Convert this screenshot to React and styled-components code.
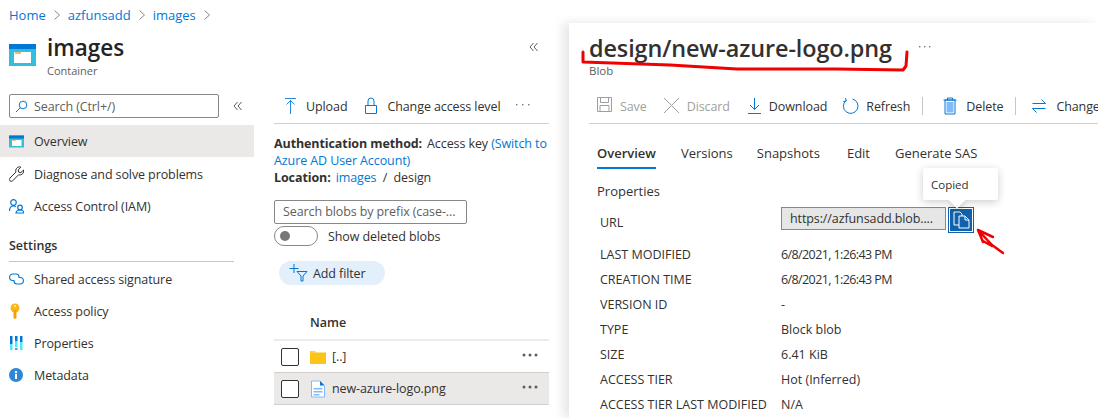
import React from "react";
import styled, { createGlobalStyle } from "styled-components";

const Global = createGlobalStyle`
  html, body { margin: 0; padding: 0; background: #fff; }
  * { box-sizing: border-box; }
  #root { font-family: "Open Sans", "Noto Sans", sans-serif; color: #323130; }
`;

const Page = styled.div`
  position: relative;
  width: 1098px;
  height: 418px;
  overflow: hidden;
  display: grid;
  grid-template-columns: 569px 529px;
  background: #fff;
`;
const LeftArea = styled.div`
  display: flex;
  flex-direction: column;
  min-width: 0;
`;
const Breadcrumb = styled.nav`
  height: 30px;
  padding-left: 9px;
  display: flex;
  align-items: center;
  gap: 7px;
  font-size: 13px;
`;
const Crumb = styled.a`
  color: #0078d4;
`;
const Chevron = styled.svg`
  width: 8px;
  height: 12px;
  fill: none;
  stroke: #8a8886;
  stroke-width: 1;
`;
const Blade = styled.div`
  flex: 1;
  display: grid;
  grid-template-columns: 254px 315px;
  align-content: start;
`;
const ResourceHead = styled.header`
  grid-column: 1 / 3;
  height: 50px;
  padding: 3px 30px 0 9px;
  display: flex;
  align-items: flex-start;
  gap: 11px;
`;
const HeadIcon = styled.svg`
  width: 27px;
  height: 22px;
  margin-top: 11px;
  flex: none;
`;
const HeadText = styled.div`
  flex: 1;
`;
const ResourceTitle = styled.h1`
  margin: 0;
  font-size: 22.5px;
  line-height: 30px;
  font-weight: 600;
  color: #252423;
`;
const SubTitle = styled.div`
  font-size: 11px;
  line-height: 14px;
  margin-top: 1px;
  color: #605e5c;
`;
const Collapse = styled.svg`
  width: 10px;
  height: 10px;
  flex: none;
  fill: none;
  stroke: #605e5c;
  stroke-width: 1;
  margin-top: ${(p) => p.$top || 0}px;
`;
const Sidebar = styled.aside`
  display: flex;
  flex-direction: column;
`;
const SearchRow = styled.div`
  display: flex;
  align-items: center;
  padding-left: 9px;
  height: 24px;
  margin-top: 14px;
  margin-bottom: 7px;
  gap: 14px;
`;
const SearchBox = styled.div`
  width: 210px;
  height: 24px;
  border: 1px solid #8a8886;
  border-radius: 2px;
  display: flex;
  align-items: center;
  gap: 6px;
  padding-left: 5px;
  font-size: 12.5px;
  letter-spacing: -0.1px;
  color: #605e5c;
`;
const NavItem = styled.div`
  height: 32px;
  display: flex;
  align-items: center;
  padding-left: 9px;
  padding-top: ${(p) => (p.$active ? "1px" : "0")};
  gap: 10px;
  font-size: 12.5px;
  letter-spacing: -0.1px;
  background: ${(p) => (p.$active ? "#ebe9e7" : "transparent")};
  margin-bottom: ${(p) => (p.$active ? "1px" : "0")};
`;
const NavIcon = styled.svg`
  width: 15px;
  height: 16px;
  flex: none;
`;
const SectionTitle = styled.div`
  margin: 14px 20px 0 9px;
  height: 26px;
  border-bottom: 1px solid #c8c6c4;
  font-size: 12.5px;
  font-weight: 600;
  line-height: 20px;
`;
const SectionItems = styled.div`
  margin-top: 1px;
`;
const Files = styled.section`
  padding: 0 20px 0 20px;
  display: flex;
  flex-direction: column;
`;
const Toolbar = styled.div`
  display: flex;
  align-items: center;
  height: ${(p) => p.$h}px;
  padding-top: ${(p) => p.$top}px;
  border-bottom: 1px solid #d2d0ce;
  padding-left: ${(p) => p.$pad || 0}px;
  flex: none;
`;
const Actions = styled(Toolbar)`
  overflow: hidden;
`;
const ToolButton = styled.div`
  display: flex;
  align-items: center;
  gap: ${(p) => p.$gap || 8}px;
  margin-right: ${(p) => p.$mr || 0}px;
  font-size: 12.5px;
  letter-spacing: -0.1px;
  white-space: nowrap;
  color: ${(p) => (p.$disabled ? "#a19f9d" : "#323130")};
`;
const ToolIcon = styled.svg`
  width: ${(p) => p.$w || 16}px;
  height: 18px;
  flex: none;
`;
const Dots = styled.svg`
  flex: none;
  width: ${(p) => p.$w}px;
  height: 3px;
  margin-top: -3px;
  fill: #797775;
`;
const Info = styled.div`
  margin-top: 11px;
  font-size: 12.5px;
  line-height: 17px;
  letter-spacing: -0.1px;
`;
const Strong = styled.b`
  font-weight: 700;
  margin-right: 5px;
`;
const Link = styled.span`
  color: #0078d4;
`;
const BlobSearch = styled.div`
  margin-top: 14px;
  width: 193px;
  height: 24px;
  border: 1px solid #8a8886;
  border-radius: 2px;
  padding-left: 8px;
  font-size: 12.5px;
  line-height: 22px;
  letter-spacing: -0.1px;
  color: #605e5c;
  white-space: nowrap;
`;
const ToggleRow = styled.div`
  display: flex;
  align-items: center;
  margin-top: 2px;
  gap: 10px;
  font-size: 12.5px;
  letter-spacing: -0.1px;
`;
const Toggle = styled.div`
  width: 44px;
  height: 20px;
  border: 1px solid #8a8886;
  border-radius: 10px;
  padding: 4px 5px;
`;
const Knob = styled.div`
  width: 10px;
  height: 10px;
  border-radius: 50%;
  background: #797775;
`;
const FilterPill = styled.div`
  margin: 15px 0 0 5px;
  width: 106px;
  height: 24px;
  border-radius: 12px;
  background: #e3f0fb;
  display: flex;
  align-items: center;
  gap: 5px;
  padding-left: 10px;
  font-size: 12.5px;
  letter-spacing: -0.1px;
`;
const TableHead = styled.div`
  margin-top: 27px;
  height: 29px;
  padding-left: 36px;
  border-bottom: 2px solid #edebe9;
  font-size: 12.5px;
  font-weight: 600;
  line-height: 22px;
`;
const FileRow = styled.div`
  height: ${(p) => (p.$selected ? 33 : 31)}px;
  display: flex;
  align-items: center;
  padding: 0 10px 0 7px;
  font-size: 12.5px;
  letter-spacing: -0.1px;
  background: ${(p) => (p.$selected ? "#ebe9e7" : "#fff")};
  border-top: ${(p) => (p.$selected ? "1px solid #d2d0ce" : "none")};
  border-bottom: ${(p) => (p.$selected ? "1px solid #d2d0ce" : "none")};
`;
const Check = styled.div`
  width: 18px;
  height: 18px;
  border: 1px solid #323130;
  border-radius: 2px;
  background: #fff;
  flex: none;
  margin-right: 11px;
`;
const FileIcon = styled.svg`
  width: 16px;
  height: 18px;
  flex: none;
  margin-right: 6px;
`;
const FileName = styled.span`
  flex: 1;
`;
const RowDots = styled.svg`
  width: 18px;
  height: 4px;
  flex: none;
  fill: #605e5c;
  margin-top: -3px;
`;
const Pane = styled.main`
  position: relative;
  margin-top: 23px;
  padding-left: 20px;
  box-shadow: -6px 0 10px rgba(0, 0, 0, 0.1);
  display: flex;
  flex-direction: column;
  min-width: 0;
  background: #fff;
`;
const PaneHead = styled.header`
  height: 60px;
  padding-top: 10px;
`;
const TitleRow = styled.div`
  display: flex;
  align-items: center;
  height: 30px;
  gap: 27px;
`;
const PaneTitle = styled.h2`
  margin: 0;
  font-size: 23.4px;
  line-height: 30px;
  font-weight: 600;
  letter-spacing: -0.1px;
  color: #323130;
`;
const BlobLabel = styled.div`
  font-size: 11.5px;
  line-height: 13px;
  margin-top: 1px;
  color: #605e5c;
`;
const Sep = styled.div`
  width: 1px;
  height: 18px;
  flex: none;
  background: #c8c6c4;
  margin-right: ${(p) => p.$mr}px;
`;
const Tabs = styled.div`
  display: flex;
  align-items: flex-start;
  padding: 20px 0 0 8px;
  height: 47px;
  flex: none;
`;
const Tab = styled.div`
  margin-right: ${(p) => p.$mr}px;
  padding-bottom: 5px;
  line-height: 18px;
  font-size: 13px;
  font-weight: ${(p) => (p.$active ? 600 : 400)};
  border-bottom: ${(p) => (p.$active ? "2px solid #0078d4" : "none")};
  white-space: nowrap;
`;
const PropsTitle = styled.div`
  margin: 11px 0 0 8px;
  font-size: 13px;
  line-height: 18px;
`;
const PropList = styled.div`
  margin-top: 7px;
  padding-left: 11px;
  display: flex;
  flex-direction: column;
`;
const PropRow = styled.div`
  display: grid;
  grid-template-columns: 181px 1fr;
  align-items: center;
  height: ${(p) => p.$h || 25}px;
  margin-bottom: ${(p) => p.$mb || 0}px;
  font-size: 12.5px;
  white-space: nowrap;
`;
const PropValue = styled.span`
  letter-spacing: ${(p) => (p.$tight ? "-0.6px" : "0")};
`;
const UrlCell = styled.div`
  position: relative;
  align-self: start;
  display: flex;
  align-items: flex-start;
  gap: 2px;
`;
const UrlBox = styled.div`
  width: 165px;
  height: 23px;
  background: #e6e6e6;
  border: 1px solid #8a8886;
  padding-left: 8px;
  font-size: 12.5px;
  letter-spacing: -0.1px;
  line-height: 21px;
`;
const CopyButton = styled.div`
  width: 26px;
  height: 26px;
  background: #0f62ab;
  border: 1px solid #0f62ab;
  display: flex;
  align-items: center;
  justify-content: center;
  box-shadow: inset 0 0 0 1px #fff;
`;
const Tooltip = styled.div`
  position: absolute;
  left: 142px;
  top: -39px;
  width: 75px;
  height: 32px;
  background: #fff;
  padding: 9px 0 0 8px;
  font-size: 11.5px;
  line-height: 16px;
  border-radius: 2px;
  box-shadow: 0 2px 8px rgba(0, 0, 0, 0.2);
  &::after {
    content: "";
    position: absolute;
    left: 28px;
    bottom: -6px;
    width: 12px;
    height: 12px;
    background: #fff;
    transform: rotate(45deg);
    box-shadow: 3px 3px 5px rgba(0, 0, 0, 0.12);
  }
`;
const Ink = styled.svg`
  position: absolute;
  left: 0;
  top: 0;
  width: 1098px;
  height: 418px;
  pointer-events: none;
  fill: none;
  stroke: #f00000;
  stroke-linecap: round;
  stroke-linejoin: round;
`;

const Gt = () => (
  <Chevron viewBox="0 0 8 12">
    <path d="M1.5 1.5 6.5 6l-5 4.5" />
  </Chevron>
);
const DoubleLeft = ({ top }) => (
  <Collapse viewBox="0 0 10 10" $top={top}>
    <path d="M4.5 1 1 5l3.5 4M8.5 1 5 5l3.5 4" />
  </Collapse>
);
const Tool = ({ w, children, label, gap, mr, disabled }) => (
  <ToolButton $gap={gap} $mr={mr} $disabled={disabled}>
    <ToolIcon viewBox={`0 0 ${w || 16} 18`} $w={w}>{children}</ToolIcon>
    {label}
  </ToolButton>
);
const ThreeDots = () => (
  <RowDots viewBox="0 0 18 4">
    <circle cx="3" cy="2" r="1.5" />
    <circle cx="9" cy="2" r="1.5" />
    <circle cx="15" cy="2" r="1.5" />
  </RowDots>
);
const SmallDots = ({ step }) => (
  <Dots viewBox={`0 0 ${step * 2 + 2} 3`} $w={step * 2 + 2}>
    <rect x="0" y="1" width="1.4" height="1.4" />
    <rect x={step} y="1" width="1.4" height="1.4" />
    <rect x={step * 2} y="1" width="1.4" height="1.4" />
  </Dots>
);

const DATE = "6/8/2021, 1:26:43 PM";
const props = [
  ["LAST MODIFIED", DATE, true],
  ["CREATION TIME", DATE, true],
  ["VERSION ID", "-"],
  ["TYPE", "Block blob"],
  ["SIZE", "6.41 KiB"],
  ["ACCESS TIER", "Hot (Inferred)"],
  ["ACCESS TIER LAST MODIFIED", "N/A"],
];

export default function App() {
  return (
    <Page>
      <Global />
      <LeftArea>
        <Breadcrumb>
          <Crumb>Home</Crumb><Gt />
          <Crumb>azfunsadd</Crumb><Gt />
          <Crumb>images</Crumb><Gt />
        </Breadcrumb>
        <Blade>
          <ResourceHead>
            <HeadIcon viewBox="0 0 27 22">
              <rect width="27" height="22" fill="#32bedd" />
              <rect width="27" height="5" fill="#0078d4" />
              <rect x="5" y="8" width="17" height="11" fill="#fff" />
              <rect x="6" y="8" width="6" height="2" fill="#f5b47a" />
            </HeadIcon>
            <HeadText>
              <ResourceTitle>images</ResourceTitle>
              <SubTitle>Container</SubTitle>
            </HeadText>
            <DoubleLeft top={9} />
          </ResourceHead>
          <Sidebar>
            <SearchRow>
              <SearchBox>
                <svg width="13" height="13" viewBox="0 0 13 13" fill="none" stroke="#0078d4">
                  <circle cx="8" cy="5" r="3.8" />
                  <path d="M5.2 7.8 1 12" />
                </svg>
                Search (Ctrl+/)
              </SearchBox>
              <DoubleLeft />
            </SearchRow>
            <NavItem $active>
              <NavIcon viewBox="0 0 15 16">
                <rect y="1.5" width="15" height="12" fill="#32bedd" />
                <rect y="1.5" width="15" height="3" fill="#0078d4" />
                <rect x="3" y="6" width="9.5" height="6" fill="#fff" />
                <rect x="3.5" y="6" width="3" height="1" fill="#f5b47a" />
              </NavIcon>
              Overview
            </NavItem>
            <NavItem>
              <NavIcon viewBox="0 0 15 16" fill="none" stroke="#323130">
                <path d="M10.5.8a4 4 0 0 0-3.6 5.3L.9 12.1a1.9 1.9 0 0 0 2.7 2.7L9.6 8.8a4 4 0 0 0 5-4.8l-2.7 2.6-2.2-.5-.5-2.2 2.7-2.7a4 4 0 0 0-1.4-.4z" />
              </NavIcon>
              Diagnose and solve problems
            </NavItem>
            <NavItem>
              <NavIcon viewBox="0 0 15 16" fill="none" stroke="#0078d4" strokeWidth="1.2">
                <circle cx="4.5" cy="4.5" r="2.8" />
                <path d="M.5 13c0-3 1.7-5 4-5 1 0 1.7.2 2.3.8" />
                <circle cx="11" cy="9.5" r="2.3" />
                <path d="M7 15c.2-2 1.7-3 4-3s3.800 1 4 3z" />
              </NavIcon>
              Access Control (IAM)
            </NavItem>
            <SectionTitle>Settings</SectionTitle>
            <SectionItems>
              <NavItem>
                <NavIcon viewBox="0 0 15 16" fill="none" stroke="#0078d4" strokeWidth="1.1">
                  <path d="M5.5 9.5H4C2 9.5.6 8.2.6 6.2S2 3 4 3h3c1.800 0 3 1.200 3 3" />
                  <path d="M9.500 6.500H11c2 0 3.400 1.300 3.400 3.300S13 13 11 13H8c-1.800 0-3-1.200-3-3" />
                </NavIcon>
                Shared access signature
              </NavItem>
              <NavItem>
                <NavIcon viewBox="0 0 15 16">
                  <circle cx="6" cy="5" r="4.5" fill="#fcb714" />
                  <path d="M4.500 7h3v8l-1.500 1-1.500-1z" fill="#f59e0b" />
                  <circle cx="6" cy="3" r="1" fill="#fff3c4" />
                </NavIcon>
                Access policy
              </NavItem>
              <NavItem>
                <NavIcon viewBox="0 0 15 16">
                  <rect x="1" y="1" width="2.5" height="8" fill="#0078d4" />
                  <rect x="1" y="9" width="2.5" height="6" fill="#50e6ff" />
                  <rect x="6" y="1" width="2.5" height="5" fill="#0078d4" />
                  <rect x="6" y="6" width="2.5" height="6" fill="#50e6ff" />
                  <rect x="6" y="13" width="2.5" height="2" fill="#50a0e6" />
                  <rect x="11" y="1" width="2.5" height="6" fill="#0078d4" />
                  <rect x="11" y="7" width="2.5" height="8" fill="#50e6ff" />
                </NavIcon>
                Properties
              </NavItem>
              <NavItem>
                <NavIcon viewBox="0 0 15 16">
                  <circle cx="7" cy="8" r="7" fill="#2b88d8" />
                  <rect x="6" y="7" width="2" height="5" fill="#fff" />
                  <circle cx="7" cy="5" r="1.2" fill="#fff" />
                </NavIcon>
                Metadata
              </NavItem>
            </SectionItems>
          </Sidebar>
          <Files>
            <Toolbar $h={44} $top={9} $pad={11}>
              <Tool w={11} label="Upload" gap={10} mr={18}>
                <path d="M0 1.5h11M5.5 17V3.500M1.500 7.500l4-4 4 4" fill="none" stroke="#2b88d8" />
              </Tool>
              <Tool w={12} label="Change access level" gap={10} mr={16}>
                <path d="M.5 8.500h11v8H.5zM3 8.500V4a3 3 0 0 1 6 0v4.500" fill="none" stroke="#0078d4" />
              </Tool>
              <SmallDots step={6} />
            </Toolbar>
            <Info>
              <Strong>Authentication method:</Strong>Access key <Link>(Switch to Azure AD User Account)</Link>
              <br />
              <Strong>Location:</Strong><Link>images</Link>&nbsp;&nbsp;/&nbsp;&nbsp;design
            </Info>
            <BlobSearch>Search blobs by prefix (case-...</BlobSearch>
            <ToggleRow>
              <Toggle><Knob /></Toggle>
              Show deleted blobs
            </ToggleRow>
            <FilterPill>
              <svg width="19" height="19" viewBox="0 0 19 19" fill="none" stroke="#0078d4">
                <path d="M.5 4.500h9M5 0v9" />
                <path d="M8 7.500h10l-4 4.500v5h-2v-5z" />
              </svg>
              Add filter
            </FilterPill>
            <TableHead>Name</TableHead>
            <FileRow>
              <Check />
              <FileIcon viewBox="0 0 16 18">
                <path d="M0 3h5l1 1.500h10V16H0z" fill="#fcc419" />
                <rect x="1" y="3.5" width="4" height="1" fill="#fde68a" />
              </FileIcon>
              <FileName>[..]</FileName>
              <ThreeDots />
            </FileRow>
            <FileRow $selected>
              <Check />
              <FileIcon viewBox="0 0 16 18">
                <path d="M1.500 1H10l4.500 4.500V17h-13z" fill="#fff" stroke="#83b9f9" />
                <path d="M10 1v4.500h4.500z" fill="#0078d4" />
                <path d="M3.500 8h9v1.500h-9zM3.500 11h9v1.500h-9zM3.500 14h6v1.500h-6z" fill="#83b9f9" />
              </FileIcon>
              <FileName>new-azure-logo.png</FileName>
              <ThreeDots />
            </FileRow>
          </Files>
        </Blade>
      </LeftArea>
      <Pane>
        <PaneHead>
          <TitleRow>
            <PaneTitle>design/new-azure-logo.png</PaneTitle>
            <SmallDots step={5} />
          </TitleRow>
          <BlobLabel>Blob</BlobLabel>
        </PaneHead>
        <Actions $h={41} $top={6} $pad={8}>
          <Tool w={15} label="Save" gap={8} mr={16} disabled>
            <path d="M.5.500h14v14H.5zM3.500.500v5h8v-5M3 14.500v-6h9v6" fill="none" stroke="#a19f9d" />
          </Tool>
          <Tool w={17} label="Discard" gap={7} mr={18} disabled>
            <path d="M1 1l15 15M16 1 1 16" fill="none" stroke="#a19f9d" />
          </Tool>
          <Tool w={13} label="Download" gap={8} mr={15}>
            <path d="M6.500 1v11M2 8l4.500 4.500L11 8M0 16.500h13" fill="none" stroke="#0078d4" />
          </Tool>
          <Tool w={17} label="Refresh" gap={7} mr={12}>
            <path d="M10.500 2A7.300 7.300 0 1 1 4 3.500M3.500 1l.8 3-3 .5" fill="none" stroke="#0078d4" />
          </Tool>
          <Sep $mr={20} />
          <Tool w={14} label="Delete" gap={9} mr={12}>
            <path d="M.5 3h13M4.500 3V1h5v2M2 3h10v14H2z" fill="none" stroke="#0078d4" />
            <rect x="3.5" y="5" width="7" height="10.5" fill="#83b9f9" />
          </Tool>
          <Sep $mr={16} />
          <Tool w={14} label="Change tier" gap={10}>
            <path d="M.5 6.500h13M9.500 2.500l4 4M.5 11.500h13M.5 11.500l4 4" fill="none" stroke="#0078d4" />
          </Tool>
        </Actions>
        <Tabs>
          <Tab $active $mr={25}>Overview</Tab>
          <Tab $mr={24}>Versions</Tab>
          <Tab $mr={27}>Snapshots</Tab>
          <Tab $mr={25}>Edit</Tab>
          <Tab $mr={0}>Generate SAS</Tab>
        </Tabs>
        <PropsTitle>Properties</PropsTitle>
        <PropList>
          <PropRow $h={30} $mb={5}>
            URL
            <UrlCell>
              <UrlBox>https://azfunsadd.blob....</UrlBox>
              <CopyButton>
                <svg width="17" height="18" viewBox="0 0 17 18" fill="none" stroke="#fff">
                  <path d="M1 1h6l2 2v11H1z" />
                  <path d="M6 5h6l4 4v8H6zM12 5v4h4" fill="#0f62ab" />
                </svg>
              </CopyButton>
              <Tooltip>Copied</Tooltip>
            </UrlCell>
          </PropRow>
          {props.map(([k, v, tight]) => (
            <PropRow key={k}><span>{k}</span><PropValue $tight={tight}>{v}</PropValue></PropRow>
          ))}
        </PropList>
      </Pane>
      <Ink viewBox="0 0 1098 418">
        <path d="M583 52 L583 62 L670 65 L737 69 L836 69 L903 70 L906 66 L907 52" strokeWidth="3" />
        <path d="M1003 253 L992 245 L978 230 M978 230 L983 242 M978 230 L993 237 M983 241 L992 246" strokeWidth="2.5" />
      </Ink>
    </Page>
  );
}
